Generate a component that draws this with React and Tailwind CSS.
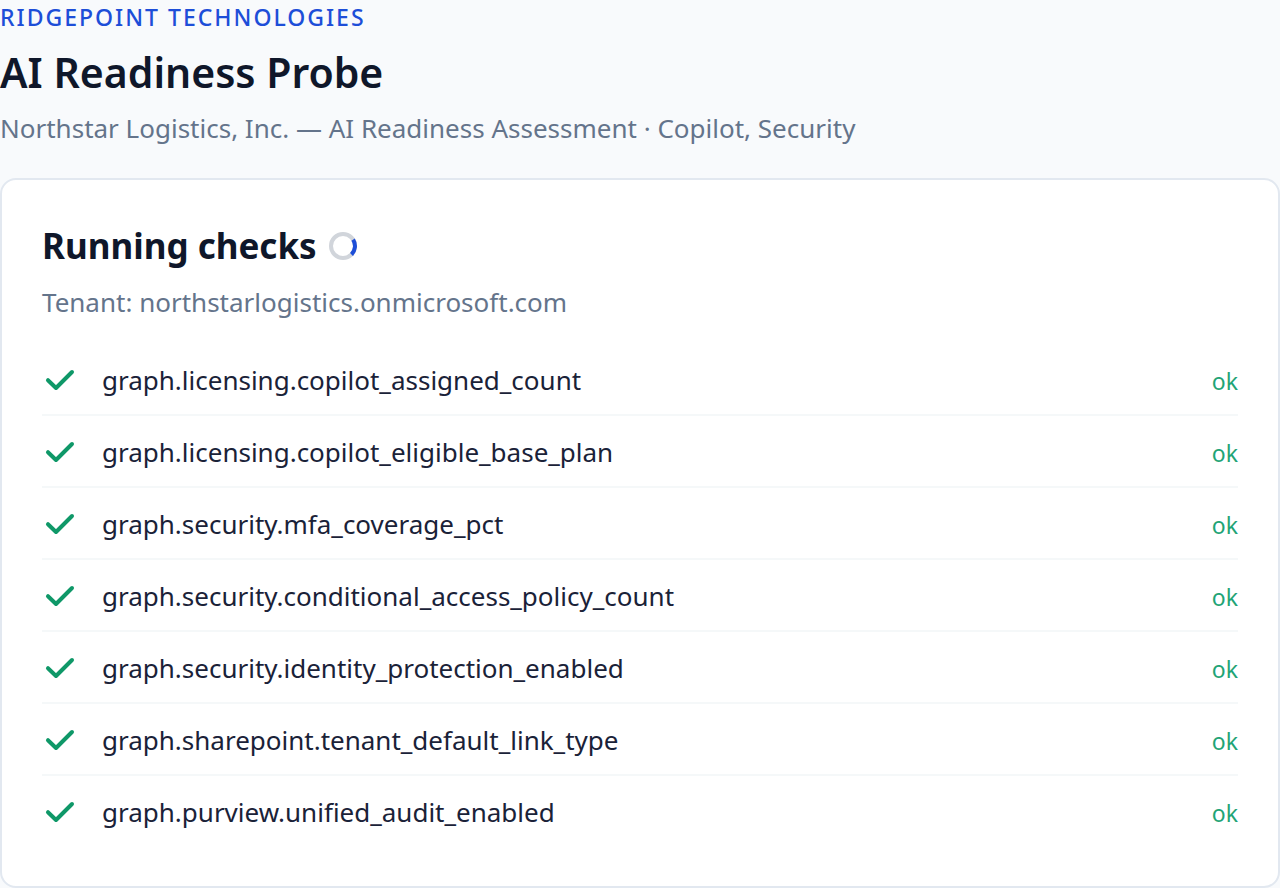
const CHECKS = [
  { id: 'graph.licensing.copilot_assigned_count', status: 'ok' },
  { id: 'graph.licensing.copilot_eligible_base_plan', status: 'ok' },
  { id: 'graph.security.mfa_coverage_pct', status: 'ok' },
  { id: 'graph.security.conditional_access_policy_count', status: 'ok' },
  { id: 'graph.security.identity_protection_enabled', status: 'ok' },
  { id: 'graph.sharepoint.tenant_default_link_type', status: 'ok' },
  { id: 'graph.purview.unified_audit_enabled', status: 'ok' },
]

// ── Icons ─────────────────────────────────────────────────────────────────────
function CheckIcon() {
  return (
    <svg className="size-9 shrink-0 self-center text-[#0f9868]" viewBox="0 0 36 36" fill="none"
      stroke="currentColor" strokeWidth="4" strokeLinecap="round" strokeLinejoin="round" aria-hidden="true">
      <path d="M6 18.2 14 26 30 10" />
    </svg>
  )
}

function Spinner() {
  return (
    <svg className="size-7 shrink-0" viewBox="0 0 28 28" fill="none" strokeWidth="4" role="status" aria-label="Running">
      <circle cx="14" cy="14" r="12" stroke="#d1d5db" />
      <path d="M24.1 7.6A12 12 0 0 1 22.5 22.5" stroke="#1d4ed8" />
    </svg>
  )
}

// ── Rows ──────────────────────────────────────────────────────────────────────
function CheckRow({ check }) {
  return (
    <li className="flex items-baseline gap-6 border-b-2 border-[#f5f8f9] pt-[18px] pb-4 leading-9 last:border-b-0">
      <CheckIcon />
      <span className="min-w-0 flex-1 text-[26px] leading-9 text-[#1a2238]">{check.id}</span>
      <span className="text-[23px] leading-8 text-[#1fa476]">{check.status}</span>
    </li>
  )
}

export default function App() {
  return (
    <div className="min-h-screen bg-[#f8fafc] font-['Noto_Sans',sans-serif] text-[#0f172a]">
      <header className="pb-8">
        <p className="text-[23px] leading-[34px] font-medium tracking-[2px] text-[#1d4ed8]">RIDGEPOINT TECHNOLOGIES</p>
        <h1 className="pt-[10px] text-[41px] leading-[56px] font-semibold">AI Readiness Probe</h1>
        <p className="pt-[10px] text-[26px] leading-9 text-[#64748b]">
          Northstar Logistics, Inc. — AI Readiness Assessment · Copilot, Security
        </p>
      </header>

      <main className="rounded-2xl border-2 border-[#e2e8f0] bg-white p-10">
        <div className="flex items-center gap-3">
          <h2 className="text-[35px] leading-[52px] font-bold">Running checks</h2>
          <Spinner />
        </div>
        <p className="pt-3 text-[26px] leading-9 text-[#64748b]">Tenant: northstarlogistics.onmicrosoft.com</p>
        <ul className="pt-6">
          {CHECKS.map(check => <CheckRow key={check.id} check={check} />)}
        </ul>
      </main>
    </div>
  )
}
